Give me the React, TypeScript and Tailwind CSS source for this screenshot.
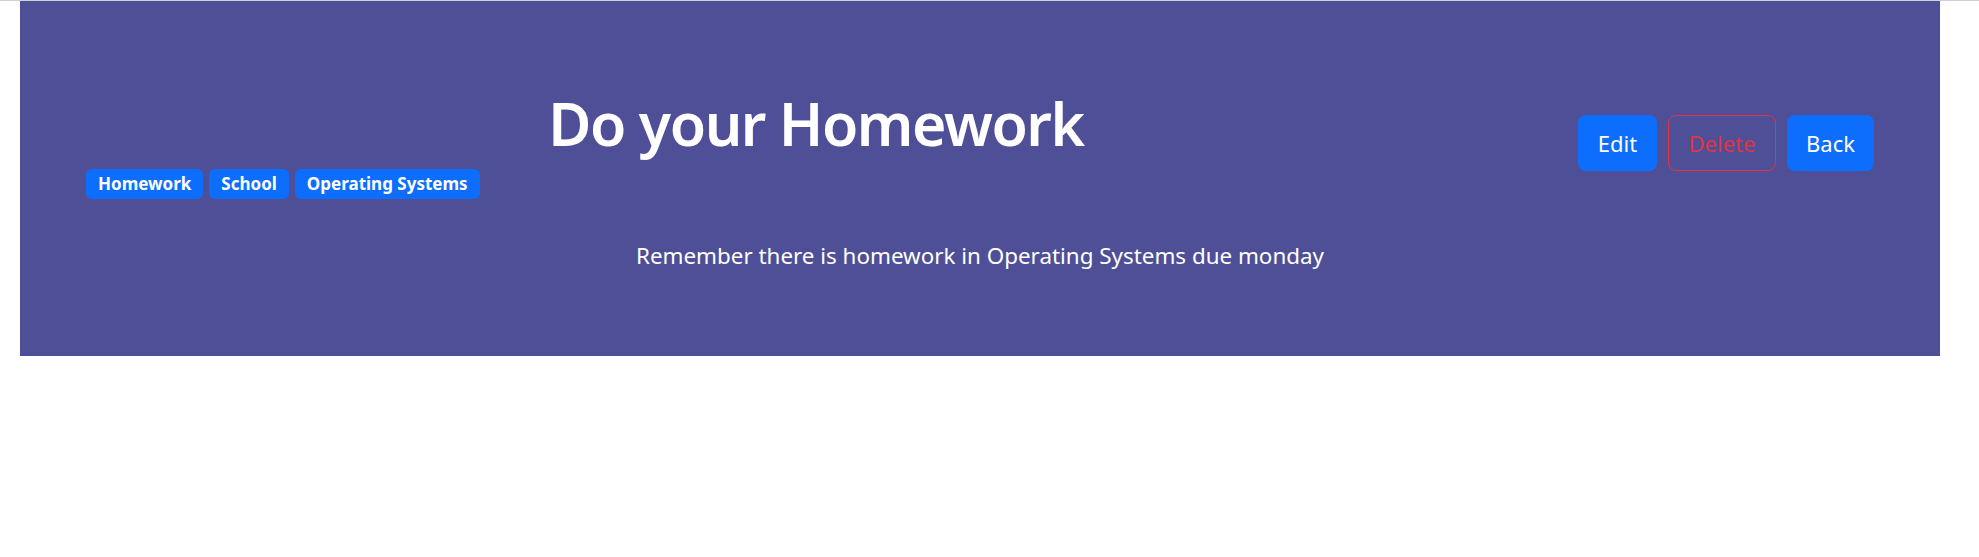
import React from "react";

const tags = ["Homework", "School", "Operating Systems"];

export default function App() {
  return (
    <div className="min-h-[557px] border-t border-[#d0d0d0] bg-white font-['Noto_Sans',sans-serif]">
      <div className="ml-[20px] w-[1920px] bg-[#4f4f98] px-[66px] pt-[86px] pb-[84px] text-white">
        <div className="flex items-center gap-[32px]">
          <div className="flex-1">
            <h1 className="text-center text-[59px] leading-[72px] font-semibold tracking-tight">
              Do your Homework
            </h1>
            <div className="mt-[10px] flex gap-[6px]">
              {tags.map((tag) => (
                <span
                  key={tag}
                  className="flex h-[30px] items-center rounded-[6px] bg-[#0d6efd] px-[12px] text-[17px] font-bold"
                >
                  {tag}
                </span>
              ))}
            </div>
          </div>
          <div className="flex gap-[11px]">
            <button className="flex h-[56px] w-[79px] items-center justify-center rounded-lg bg-[#0d6efd] text-[22px]">
              Edit
            </button>
            <button className="flex h-[56px] w-[108px] items-center justify-center rounded-lg border border-[#dc3545] text-[22px] text-[#dc3545]">
              Delete
            </button>
            <button className="flex h-[56px] w-[87px] items-center justify-center rounded-lg bg-[#0d6efd] text-[22px]">
              Back
            </button>
          </div>
        </div>
        <p className="mt-[40px] text-center text-[22.4px] leading-[33px]">
          Remember there is homework in Operating Systems due monday
        </p>
      </div>
    </div>
  );
}
